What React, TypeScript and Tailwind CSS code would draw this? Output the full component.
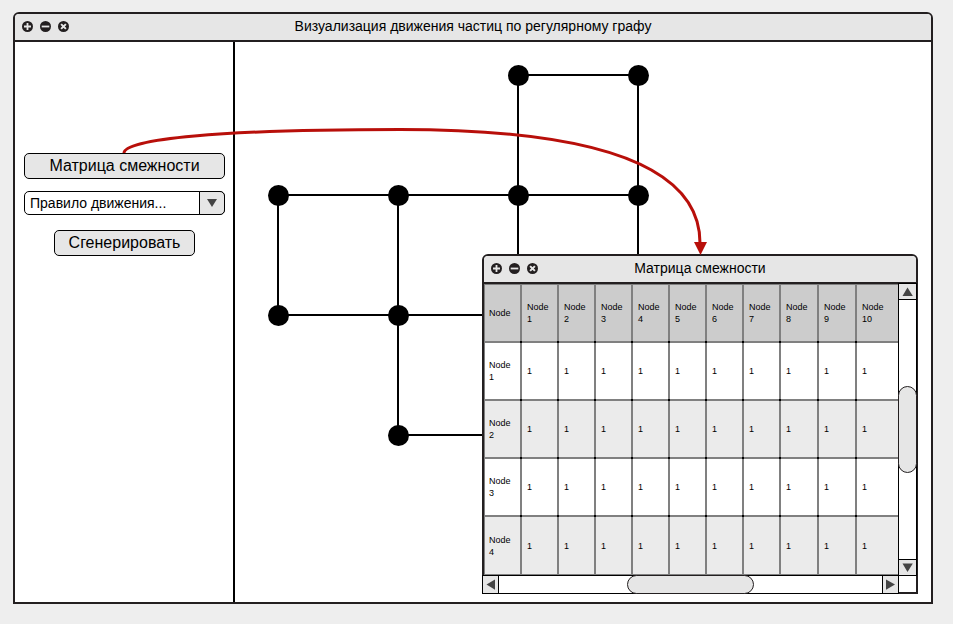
import type { ReactNode } from "react";

const NODES: [number, number][] = [
  [518, 75],
  [638, 75],
  [278, 195],
  [398, 195],
  [518, 195],
  [638, 195],
  [278, 315],
  [398, 315],
  [398, 435],
];

const EDGES = [
  "M518 75H638",
  "M278 195H638",
  "M278 315H518",
  "M398 435H518",
  "M278 195V315",
  "M398 195V435",
  "M518 75V315",
  "M638 75V315",
];

const COLUMNS = ["1", "2", "3", "4", "5", "6", "7", "8", "9", "10"];
const ROWS = ["1", "2", "3", "4"];

const CELL =
  "relative border-r-2 border-b-2 border-[#808080] py-0 pr-1 pl-[5px] text-left align-middle font-normal first:border-l first:pl-1 last:border-r-0 group-last:border-b after:absolute after:-right-0.5 after:-bottom-0.5 after:z-10 after:size-0.5 after:bg-black after:content-[''] last:after:hidden group-last:after:hidden";

function WindowButton({ label, children }: { label: string; children: ReactNode }) {
  return (
    <button type="button" aria-label={label} className="block size-[11px]">
      <svg viewBox="0 0 11 11" className="block size-[11px]" stroke="#e6e6e6" strokeWidth="1.8">
        <circle cx="5.5" cy="5.5" r="5.5" fill="#231f20" stroke="none" />
        {children}
      </svg>
    </button>
  );
}

function TitleBar({ title }: { title: string }) {
  return (
    <header className="grid h-7 shrink-0 grid-cols-[1fr_auto_1fr] items-center rounded-t-sm border-b-2 border-[#231f20] bg-[#e6e6e6] px-[7px] pb-0.5">
      <div className="flex gap-[7px]">
        <WindowButton label="Развернуть">
          <path d="M5.5 2V9M2 5.5H9" />
        </WindowButton>
        <WindowButton label="Свернуть">
          <path d="M1.7 5.5H9.3" />
        </WindowButton>
        <WindowButton label="Закрыть">
          <path d="M3.1 3.1L7.9 7.9M7.9 3.1L3.1 7.9" strokeWidth="2" />
        </WindowButton>
      </div>
      <h2 className="text-sm">{title}</h2>
    </header>
  );
}

function ArrowButton({ label, points, className }: { label: string; points: string; className: string }) {
  return (
    <button type="button" aria-label={label} className={`flex shrink-0 items-center justify-center bg-[#e6e6e6] ${className}`}>
      <svg viewBox="0 0 12 12" className="block size-3">
        <polygon points={points} fill="#444" />
      </svg>
    </button>
  );
}

function MatrixWindow() {
  return (
    <section className="absolute right-[13px] bottom-2 w-[436px] rounded-t-md border-2 border-[#231f20] bg-white">
      <TitleBar title="Матрица смежности" />
      <div className="grid grid-cols-[1fr_18px] grid-rows-[auto_17px]">
        <table className="w-full table-fixed border-separate border-spacing-0 text-[9px] leading-3">
          <colgroup>
            <col className="w-[38px]" />
            <col span={7} className="w-[37px]" />
            <col span={2} className="w-[38px]" />
            <col />
          </colgroup>
          <thead>
            <tr className="h-[59px] bg-[#ccc]">
              <th scope="col" className={`${CELL} border-t`}>Node</th>
              {COLUMNS.map((n) => (
                <th key={n} scope="col" className={`${CELL} border-t`}>
                  Node<br />{n}
                </th>
              ))}
            </tr>
          </thead>
          <tbody>
            {ROWS.map((r) => (
              <tr key={r} className="group h-[58px] bg-white even:bg-[#ebebeb]">
                <th scope="row" className={CELL}>
                  Node<br />{r}
                </th>
                {COLUMNS.map((n) => (
                  <td key={n} className={CELL}>1</td>
                ))}
              </tr>
            ))}
          </tbody>
        </table>
        <div className="-mt-px -mr-px -mb-px flex flex-col border border-black bg-white">
          <ArrowButton label="Вверх" points="5.5,1.5 10.8,10 0.5,10" className="h-4 border-b border-black" />
          <div className="flex-1">
            <div className="-mx-px mt-[86px] h-[87px] rounded-full border border-[#231f20] bg-[#e6e6e6]" />
          </div>
          <ArrowButton label="Вниз" points="0.5,1.5 10.8,1.5 5.5,10" className="h-4 border-t border-black" />
        </div>
        <div className="-mr-px -mb-0.5 -ml-0.5 flex border border-black bg-white">
          <ArrowButton label="Влево" points="1.5,5.5 10,0.5 10,10.8" className="w-4 border-r border-black" />
          <div className="flex-1">
            <div className="-my-px ml-32 h-[19px] w-[127px] rounded-full border border-[#231f20] bg-[#e6e6e6]" />
          </div>
          <ArrowButton label="Вправо" points="1,0.5 10,5.5 1,10.8" className="w-4 border-l border-black" />
        </div>
      </div>
    </section>
  );
}

export default function App() {
  return (
    <main className="flex min-h-screen flex-col bg-[#eee] pt-3 pr-5 pb-5 pl-[13px] font-['Liberation_Sans',Arial,sans-serif] text-black">
      <div className="relative flex flex-1 flex-col rounded-t-md border-2 border-[#231f20] bg-white">
        <TitleBar title="Визуализация движения частиц по регулярному графу" />
        <div className="flex flex-1">
          <aside className="flex w-[220px] shrink-0 flex-col items-center border-r-2 border-black px-2 pt-[111px] pl-[9px]">
            <button type="button" className="h-[26px] w-full rounded-[5px] border border-black bg-[#e6e6e6] text-base leading-6">
              Матрица смежности
            </button>
            <div className="mt-3 grid w-full grid-cols-[1fr_26px]">
              <select
                aria-label="Правило движения"
                className="col-span-2 col-start-1 row-start-1 h-6 w-full appearance-none rounded-[5px] border border-black bg-white pr-7 pl-[5px] text-sm leading-5"
              >
                <option>Правило движения...</option>
              </select>
              <span className="pointer-events-none col-start-2 row-start-1 flex items-center justify-center rounded-r-[5px] border border-black bg-[#e6e6e6]">
                <svg viewBox="0 0 12 12" className="block size-3">
                  <polygon points="1,2 11,2 6,10" fill="#444" />
                </svg>
              </span>
            </div>
            <button type="button" className="mt-[15px] h-[26px] w-[141px] rounded-[5px] border border-black bg-[#e6e6e6] text-base leading-6">
              Сгенерировать
            </button>
          </aside>
          <div className="relative min-w-0 flex-1">
            <svg viewBox="235 42 480 420" className="block h-[420px] w-[480px]">
              <path d={EDGES.join("")} stroke="#000" strokeWidth="2" fill="none" />
              {NODES.map(([x, y]) => (
                <circle key={`${x}-${y}`} cx={x + 0.5} cy={y + 0.5} r="10.5" />
              ))}
            </svg>
            <MatrixWindow />
          </div>
        </div>
        <svg
          viewBox="15 14 700 245"
          className="pointer-events-none absolute top-0 left-0 h-[245px] w-[700px]"
          aria-hidden="true"
        >
          <path
            d="M124 153C124 139 220 129.5 400 129.5C594 129.5 700 165 700 243"
            fill="none"
            stroke="#b80f0a"
            strokeWidth="3"
          />
          <polygon points="694,242 707,242 700.5,255" fill="#b80f0a" />
        </svg>
      </div>
    </main>
  );
}
